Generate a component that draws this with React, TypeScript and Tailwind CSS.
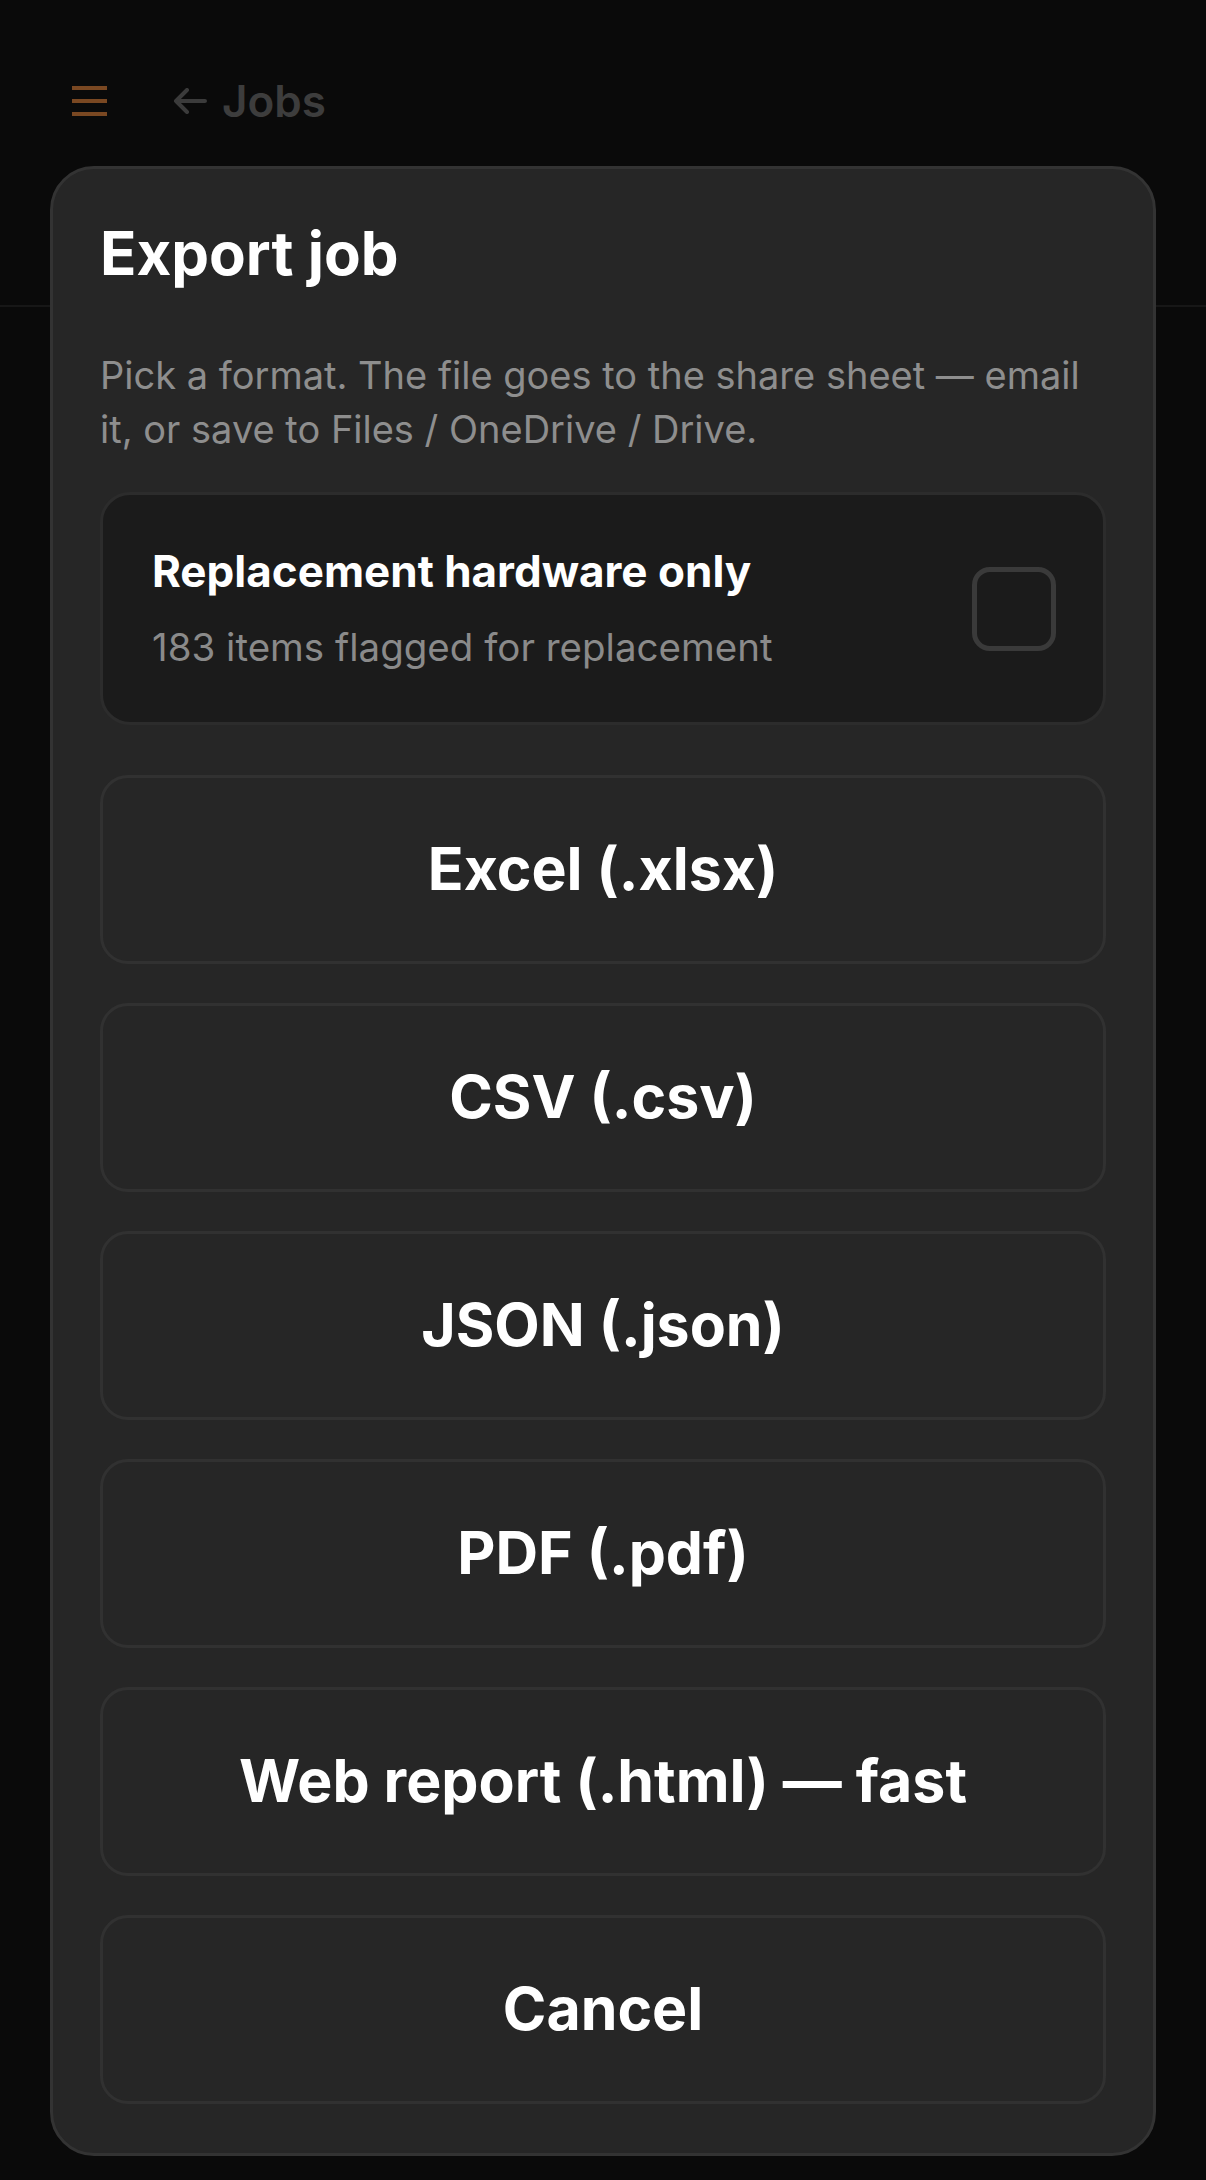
import React from "react";

const formats = [
  "Excel (.xlsx)",
  "CSV (.csv)",
  "JSON (.json)",
  "PDF (.pdf)",
  "Web report (.html) — fast",
];

export default function App() {
  return (
    <div
      className="relative min-h-[2180px] w-full bg-[#0a0a0a] overflow-hidden"
      style={{ fontFamily: "Inter, 'Noto Sans', 'Liberation Sans', sans-serif" }}
    >
      {/* Header under the sheet */}
      <header className="h-[307px] border-b-2 border-[#171717] px-[72px]">
        <div className="flex items-center h-[202px]">
          <div className="flex flex-col gap-[9px] w-[35px]">
            <span className="block h-[4px] bg-[#7a4822]" />
            <span className="block h-[4px] bg-[#7a4822]" />
            <span className="block h-[4px] bg-[#7a4822]" />
          </div>
          <div className="flex items-center ml-[66px] text-[#3d3d3d]">
            <svg width="34" height="26" viewBox="0 0 34 26" fill="none" className="mr-[15px]">
              <path
                d="M32 13H3M14 2L3 13l11 11"
                stroke="#3b3b3b"
                strokeWidth="4"
                strokeLinecap="round"
                strokeLinejoin="round"
              />
            </svg>
            <span className="text-[44px] font-semibold leading-none">Jobs</span>
          </div>
        </div>
      </header>

      {/* Export sheet */}
      <div className="absolute left-[50px] right-[50px] top-[166px] h-[1990px] rounded-[44px] border-[3px] border-[#333333] bg-[#262626] px-[47px] pt-[49px] pb-[49px] flex flex-col">
        <h1 className="text-[60px] leading-[70px] font-bold text-white">
          Export job
        </h1>
        <p className="mt-[60px] text-[38px] leading-[54px] text-[#8e8e8e]">
          Pick a format. The file goes to the share sheet — email it, or save to
          Files / OneDrive / Drive.
        </p>

        <div className="mt-[36px] h-[233px] rounded-[30px] border-[3px] border-[#2c2c2c] bg-[#1b1b1b] pl-[49px] pr-[47px] flex items-center justify-between">
          <div className="flex flex-col gap-[22px]">
            <span className="text-[44px] leading-[54px] font-bold text-white">
              Replacement hardware only
            </span>
            <span className="text-[38.5px] leading-[54px] text-[#8a8a8a]">
              183 items flagged for replacement
            </span>
          </div>
          <div className="w-[84px] h-[84px] rounded-[18px] border-[5px] border-[#3a3a3a]" />
        </div>

        <div className="mt-[50px] flex flex-col gap-[39px]">
          {[...formats, "Cancel"].map((label) => (
            <button
              key={label}
              className="h-[189px] w-full rounded-[28px] border-[3px] border-[#313131] bg-[#262626] flex items-center justify-center text-[59px] font-bold text-white"
            >
              {label}
            </button>
          ))}
        </div>
      </div>
    </div>
  );
}
